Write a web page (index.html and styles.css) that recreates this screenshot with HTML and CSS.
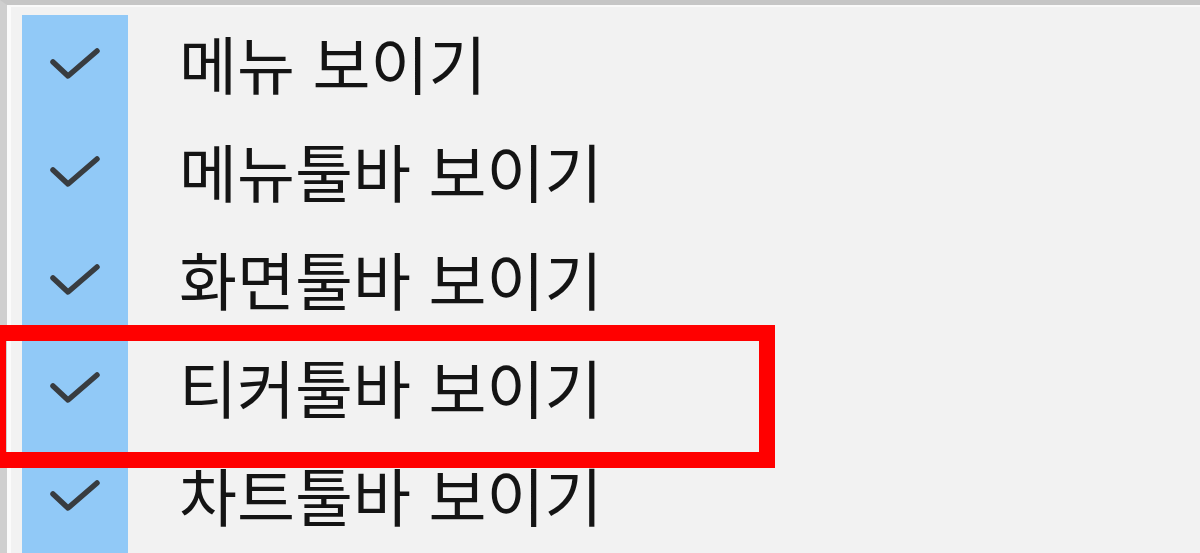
FILE: index.html
```html
<!DOCTYPE html>
<html lang="ko">
<head>
<meta charset="utf-8">
<title>메뉴</title>
<link rel="stylesheet" href="styles.css">
</head>
<body>
<div class="frame">
  <div class="panel">
    <ul class="menu">
      <li class="item"><span class="check"><svg viewBox="0 0 50 32" width="50" height="32"><path d="M3 14 L18 28 L47 3" /></svg></span><span class="label">메뉴 보이기</span></li>
      <li class="item"><span class="check"><svg viewBox="0 0 50 32" width="50" height="32"><path d="M3 14 L18 28 L47 3" /></svg></span><span class="label">메뉴툴바 보이기</span></li>
      <li class="item"><span class="check"><svg viewBox="0 0 50 32" width="50" height="32"><path d="M3 14 L18 28 L47 3" /></svg></span><span class="label">화면툴바 보이기</span></li>
      <li class="item"><span class="check"><svg viewBox="0 0 50 32" width="50" height="32"><path d="M3 14 L18 28 L47 3" /></svg></span><span class="label">티커툴바 보이기</span></li>
      <li class="item"><span class="check"><svg viewBox="0 0 50 32" width="50" height="32"><path d="M3 14 L18 28 L47 3" /></svg></span><span class="label">차트툴바 보이기</span></li>
    </ul>
  </div>
</div>
<div class="highlight"></div>
</body>
</html>
```
FILE: styles.css
```css
html, body {
  margin: 0;
  padding: 0;
  width: 1200px;
  height: 553px;
  overflow: hidden;
  background: #f2f2f2;
}
body {
  position: relative;
  font-family: "Noto Sans CJK KR", "Noto Sans", sans-serif;
}
.frame {
  height: 553px;
  box-sizing: border-box;
  border-top: 5px solid #c6c6c6;
  border-left: 7px solid #cfcfcf;
  background: #f2f2f2;
}
.panel {
  height: 100%;
  box-sizing: border-box;
  border-top: 2px solid #fafafa;
  border-left: 4px solid #fbfbfb;
  padding: 8px 0 0 11px;
}
.menu {
  list-style: none;
  margin: 0;
  padding: 0;
}
.item {
  display: grid;
  grid-template-columns: 106px 1fr;
  height: 108px;
}
.check {
  background: #91c9f7;
  display: flex;
  align-items: center;
  justify-content: center;
  padding-bottom: 10px;
}
.check svg {
  display: block;
}
.check path {
  fill: none;
  stroke: #383c40;
  stroke-width: 5.5;
  stroke-linecap: round;
  stroke-linejoin: round;
}
.label {
  display: flex;
  align-items: center;
  padding: 0 0 16px 51px;
  font-size: 63px;
  line-height: 1;
  color: #141414;
  white-space: nowrap;
}
.highlight {
  position: absolute;
  left: -10px;
  top: 325px;
  width: 785px;
  height: 143px;
  box-sizing: border-box;
  border: 16px solid #ff0000;
}
```
